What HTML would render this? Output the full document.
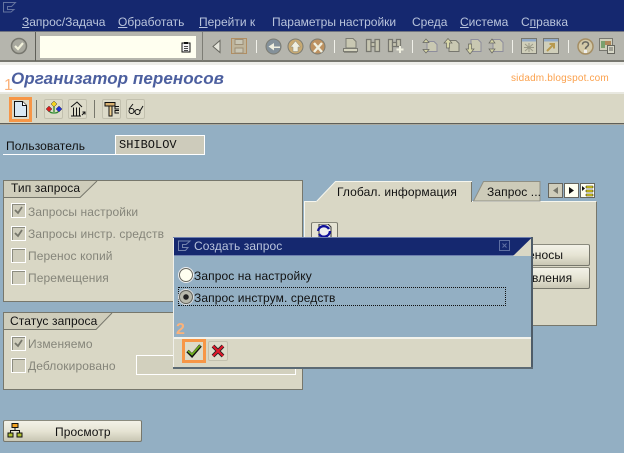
<!DOCTYPE html>
<html lang="ru"><head><meta charset="utf-8"><title>Организатор переносов</title>
<style>
html,body{margin:0;padding:0}
body{width:624px;height:453px;overflow:hidden;position:relative;background:#93afc3;font:12px/14px "Liberation Sans",sans-serif;letter-spacing:.1px;color:#111}
.a,svg,span.t{position:absolute}
.t{white-space:nowrap}
.m{position:absolute;top:15px;color:#b9c4dc;white-space:nowrap;letter-spacing:0}
.m u{text-underline-offset:1px}
.sep{position:absolute;width:1px;background:#f1f1ea}
.panel{position:absolute;background:#d9d7c5;border:1px solid #77776c;box-sizing:border-box}
.cb{position:absolute;width:13px;height:13px;border:1px solid #fff;background:#cfcdbc;box-shadow:inset 1px 1px 0 #8c8c80}
.g{color:#85857a}
.btn{position:absolute;box-sizing:border-box;border:1px solid #77776c;border-top-color:#8b8b7e;background:linear-gradient(#f3f2e8,#e6e4d4 50%,#c9c7b4);border-radius:2px}
.ib{position:absolute;top:99px;width:19px;height:20px;box-sizing:border-box;border:1px solid #c2c0ae;background:#dddbc9;border-radius:2px}
</style></head><body>
<div class="a" style="left:0;top:0;width:624px;height:31px;background:#15286f"></div>
<svg style="left:2px;top:1px" width="16" height="12" viewBox="0 0 16 12" fill="none" stroke="#64739f"><path d="M1.500 1.500H13.500L9.500 5.500H5.500V8.500H12L9 11H1.500Z"/></svg>
<span class="m" style="left:22px"><u>З</u>апрос/Задача</span>
<span class="m" style="left:118px"><u>О</u>бработать</span>
<span class="m" style="left:199px"><u>П</u>ерейти к</span>
<span class="m" style="left:272px">Параметры настройки</span>
<span class="m" style="left:412px">Среда</span>
<span class="m" style="left:460px"><u>С</u>истема</span>
<span class="m" style="left:521px">С<u>п</u>равка</span>

<div class="a" style="left:0;top:31px;width:624px;height:31px;background:#b5b5ad;border-top:1px solid #6f7380;border-bottom:2px solid #77776f;box-sizing:border-box"></div>
<div class="a" style="left:0;top:62px;width:624px;height:3px;background:#eeeeea"></div>
<svg style="left:10px;top:37px" width="18" height="18" viewBox="0 0 18 18"><circle cx="9" cy="9" r="7.500" fill="#a9a99f" stroke="#77776f" stroke-width="1.500"/><path d="M5 9l3 3 5-6" fill="none" stroke="#f2f2dc" stroke-width="2.200"/></svg>
<div class="a" style="left:35px;top:32px;width:1px;height:29px;background:#5f5f58"></div>
<div class="a" style="left:40px;top:36px;width:156px;height:22px;background:#fffff0"></div>
<svg style="left:181px;top:41px" width="10" height="12" viewBox="0 0 10 12"><path d="M1 2h8v9H1z" fill="#f4f4f4" stroke="#111"/><path d="M3 1h4v2H3z" fill="#111"/><path d="M3 5.500h4M3 7.500h4M3 9.500h4" stroke="#111" stroke-width=".8"/></svg>
<div class="a" style="left:202px;top:32px;width:1px;height:29px;background:#7d7d75"></div>
<svg style="left:211px;top:39px" width="11" height="15" viewBox="0 0 11 15"><path d="M9 1.500V13.500L2 7.500Z" fill="#e6e6dc" stroke="#66665f"/></svg>
<svg style="left:231px;top:38px" width="16" height="16" viewBox="0 0 16 16"><path d="M.5.500h15v15H.5z" fill="#bfb59c" stroke="#b18e63"/><path d="M4 1.500h8v5H4zM4 10h8v5H4z" fill="#c9c6b5" stroke="#9d8f76"/></svg>
<div class="sep" style="left:256px;top:40px;height:13px"></div>
<svg style="left:265px;top:38px" width="17" height="17" viewBox="0 0 17 17"><circle cx="8.500" cy="8.500" r="7.500" fill="#84919a" stroke="#7b7b72"/><path d="M15 8.500H9V5L3.500 8.500 9 12.500V10h6z" fill="#efefe0"/></svg>
<svg style="left:287px;top:38px" width="17" height="17" viewBox="0 0 17 17"><circle cx="8.500" cy="8.500" r="7.500" fill="#c8aa72" stroke="#7b7b72"/><path d="M8.500 3L3.500 9H6v4.500h5V9h2.500z" fill="#efefe0" stroke="#88887c" stroke-width=".5"/></svg>
<svg style="left:309px;top:38px" width="17" height="17" viewBox="0 0 17 17"><circle cx="8.500" cy="8.500" r="7.500" fill="#bd9160" stroke="#7b7b72"/><path d="M5 5l8 9M13 5l-8 9" stroke="#efefe0" stroke-width="2.400"/></svg>
<div class="sep" style="left:334px;top:40px;height:13px"></div>
<svg style="left:343px;top:38px" width="15" height="16" viewBox="0 0 15 16"><path d="M3 .500h7l3 3V10H3z" fill="#c9c8b2" stroke="#7b7b72"/><path d="M.5 10.500h14v3H.5z" fill="#d6d5c0" stroke="#7b7b72"/><path d="M1 14.500h13" stroke="#8c8c82"/></svg>
<svg style="left:365px;top:38px" width="16" height="15" viewBox="0 0 16 15" fill="#c6c5b0" stroke="#77776f" stroke-width="1.200"><path d="M1.500 1.500h4.500v12h-4.500zM10 1.500h4.500v12H10z"/><path d="M6 4.500h4v4H6z"/></svg>
<svg style="left:387px;top:38px" width="17" height="16" viewBox="0 0 17 16" fill="#c6c5b0" stroke="#77776f" stroke-width="1.200"><path d="M1.500 1.500h4v12h-4zM9.500 1.500h4v7h-4z"/><path d="M5.500 4.500h4v4h-4z"/><path d="M13 8v7M9.500 11.500h7" stroke="#eeeede" stroke-width="2"/></svg>
<div class="sep" style="left:412px;top:40px;height:13px"></div>
<svg style="left:421px;top:38px" width="17" height="16" viewBox="0 0 17 16"><path d="M6 3.500h7l3 3v7H6z" fill="#c9c8b2" stroke="#8d8d9c"/><path d="M5 1L2 4.500h6zM5 15l-3-3.500h6z" fill="#d7d6a8" stroke="#66665f" stroke-width=".7"/></svg>
<svg style="left:443px;top:38px" width="17" height="16" viewBox="0 0 17 16"><path d="M6 2.500h7l3 3v8H6z" fill="#c9c8b2" stroke="#77776f"/><path d="M5 .500L1 5h2.500v5h3V5H9z" fill="#d7d6a8" stroke="#66665f" stroke-width=".7"/></svg>
<svg style="left:465px;top:38px" width="17" height="17" viewBox="0 0 17 17"><path d="M6 1.500h7l3 3v9H6z" fill="#c9c8b2" stroke="#8d8d9c"/><path d="M5 16L1 11h2.500V6h3v5H9z" fill="#d7d6a8" stroke="#66665f" stroke-width=".7"/></svg>
<svg style="left:487px;top:38px" width="17" height="17" viewBox="0 0 17 17"><path d="M6 1.500h7l3 3v9H6z" fill="#c9c8b2" stroke="#8d8d9c"/><path d="M5 1L2 5h6zM5 15l-3-4h6z" fill="#d7d6a8" stroke="#66665f" stroke-width=".7"/></svg>
<div class="sep" style="left:512px;top:40px;height:13px"></div>
<svg style="left:521px;top:38px" width="16" height="16" viewBox="0 0 16 16"><path d="M.5.500h15v15H.5z" fill="#d0cfba" stroke="#77776f"/><path d="M1 1h14v2.500H1z" fill="#8fa8c8"/><path d="M8 5v9M4 6l8 7M12 6l-8 7M3 9.500h10" stroke="#9a9a88"/></svg>
<svg style="left:543px;top:38px" width="16" height="16" viewBox="0 0 16 16"><path d="M.5.500h15v15H.5z" fill="#d0cfba" stroke="#77776f"/><path d="M1 1h14v2.500H1z" fill="#8fa8c8"/><path d="M4 13l6-6M6.500 6H11v4.500" fill="none" stroke="#b89a4f" stroke-width="2"/></svg>
<div class="sep" style="left:568px;top:40px;height:13px"></div>
<svg style="left:577px;top:38px" width="17" height="17" viewBox="0 0 17 17"><circle cx="8.500" cy="8.500" r="7.500" fill="#d3c9a8" stroke="#a58e64" stroke-width="1.500"/><path d="M5.500 6.500C5.500 3 11.500 3 11.500 6.500 11.500 8.500 8.500 8.500 8.500 11" fill="none" stroke="#66665f" stroke-width="1.600"/><path d="M7 12h3v3H7z" fill="#eee"/></svg>
<svg style="left:599px;top:38px" width="16" height="16" viewBox="0 0 16 16"><path d="M.5.500h13v12H.5z" fill="#d0cfba" stroke="#77776f"/><path d="M2 3h4v7H2z" fill="#7aa06e"/><path d="M6 3h6v4H6z" fill="#b0885a"/><path d="M8.500 7.500h7v8h-7z" fill="#d8d8c8" stroke="#66665f"/><path d="M10 10h4M10 12h4" stroke="#66665f"/></svg>

<div class="a" style="left:0;top:65px;width:624px;height:27px;background:#fff"></div>
<span class="t" style="left:11px;top:69px;font:italic bold 17px/20px 'Liberation Sans',sans-serif;letter-spacing:.07px;color:#4c5f9f">Организатор переносов</span>
<span class="t" style="left:511px;top:72px;font:10px/13px 'Liberation Sans',sans-serif;letter-spacing:.18px;color:#fba14d">sidadm.blogspot.com</span>
<span class="t" style="left:4px;top:77px;font:16px/18px 'Liberation Sans',sans-serif;color:#fbb27a">1</span>
<div class="a" style="left:0;top:92px;width:624px;height:2px;background:#e8e8e0"></div>
<div class="a" style="left:0;top:94px;width:624px;height:29px;background:#d9d7c5"></div>
<div class="a" style="left:0;top:123px;width:624px;height:1px;background:#5f5f58"></div>
<div class="a" style="left:0;top:124px;width:624px;height:1px;background:#a9a99f"></div>

<div class="a" style="left:9px;top:97px;width:23px;height:25px;box-sizing:border-box;border:3px solid #f79646;background:#dddbc9"></div>
<svg style="left:14px;top:101px" width="13" height="16" viewBox="0 0 13 16"><path d="M.5.500h8l4 4v11H.5z" fill="#d8e8f4" stroke="#111"/><path d="M8.500.500v4h4" fill="#fff" stroke="#111"/></svg>
<div class="a" style="left:36px;top:100px;width:1px;height:18px;background:#77776c"></div>
<div class="ib" style="left:44px"></div>
<svg style="left:46px;top:101px" width="16" height="16" viewBox="0 0 16 16"><path d="M8 3v8M3 8c0 4 3 4 5 4s5 0 5-4" fill="none" stroke="#2e8b2e" stroke-width="1.300"/><path d="M8 0l3 3-3 3-3-3z" fill="#f2d21e" stroke="#444" stroke-width=".5"/><path d="M3 5l3 3-3 3-3-3z" fill="#d81e1e" stroke="#444" stroke-width=".5"/><path d="M13 5l3 3-3 3-3-3z" fill="#1e2ed8" stroke="#444" stroke-width=".5"/></svg>
<div class="ib" style="left:68px"></div>
<svg style="left:70px;top:101px" width="16" height="16" viewBox="0 0 16 16" fill="none" stroke="#111"><path d="M1 6L7 1l5 5"/><path d="M3.500 6.500v8M6.500 6.500v8M9.500 6.500v8M1 15h10"/><path d="M12 14l3-3M12.500 11H15v2.500"/></svg>
<div class="a" style="left:94px;top:100px;width:1px;height:18px;background:#77776c"></div>
<div class="ib" style="left:102px"></div>
<svg style="left:104px;top:101px" width="16" height="16" viewBox="0 0 16 16"><path d="M1 1.500h10V5H1z" fill="#d8b070" stroke="#111"/><path d="M5 5h3v10H5z" fill="#f0d090" stroke="#111"/><path d="M15 5.500H11V8h4M15 9.500h-4V12h4" fill="none" stroke="#111"/></svg>
<div class="ib" style="left:126px"></div>
<svg style="left:128px;top:102px" width="16" height="14" viewBox="0 0 16 14" fill="none" stroke="#111"><circle cx="3.500" cy="9" r="2.500"/><circle cx="9.500" cy="10" r="2.500"/><path d="M6 9l1 .5M1 7l4-5M12 9l3-5"/></svg>

<span class="t" style="left:6px;top:139px">Пользователь</span>
<div class="a" style="left:3px;top:154px;width:112px;height:1px;background:#fff"></div>
<div class="a" style="left:115px;top:135px;width:90px;height:20px;box-sizing:border-box;border:1px solid #fff;background:#cdcbbb;font:12px/16px 'Liberation Mono',monospace;letter-spacing:0;padding:1px 0 0 3px;color:#111">SHIBOLOV</div>

<div class="panel" style="left:3px;top:180px;width:300px;height:122px"></div>
<svg style="left:4px;top:181px" width="94" height="17" viewBox="0 0 94 17"><path d="M0 0H93L76 16.500H0Z" fill="#cfcdbb"/><path d="M0 16.500H76L93 0" fill="none" stroke="#77776c"/></svg>
<span class="t" style="left:11px;top:181px">Тип запроса</span>
<div class="cb" style="left:11px;top:203px"></div><svg style="left:13px;top:205px" width="11" height="11" viewBox="0 0 11 11"><path d="M2 5l3 3 4-6" fill="none" stroke="#77776c" stroke-width="1.800"/></svg>
<span class="t g" style="left:28px;top:205px">Запросы настройки</span>
<div class="cb" style="left:11px;top:226px"></div><svg style="left:13px;top:228px" width="11" height="11" viewBox="0 0 11 11"><path d="M2 5l3 3 4-6" fill="none" stroke="#77776c" stroke-width="1.800"/></svg>
<span class="t g" style="left:28px;top:227px">Запросы инстр. средств</span>
<div class="cb" style="left:11px;top:248px"></div>
<span class="t g" style="left:28px;top:249px">Перенос копий</span>
<div class="cb" style="left:11px;top:270px"></div>
<span class="t g" style="left:28px;top:271px">Перемещения</span>

<div class="panel" style="left:3px;top:312px;width:300px;height:78px"></div>
<svg style="left:4px;top:313px" width="109" height="17" viewBox="0 0 109 17"><path d="M0 0H108L92 16.500H0Z" fill="#cfcdbb"/><path d="M0 16.500H92L108 0" fill="none" stroke="#77776c"/></svg>
<span class="t" style="left:10px;top:314px">Статус запроса</span>
<div class="cb" style="left:11px;top:336px"></div><svg style="left:13px;top:338px" width="11" height="11" viewBox="0 0 11 11"><path d="M2 5l3 3 4-6" fill="none" stroke="#77776c" stroke-width="1.800"/></svg>
<span class="t g" style="left:28px;top:337px">Изменяемо</span>
<div class="cb" style="left:11px;top:358px"></div>
<span class="t g" style="left:28px;top:359px">Деблокировано</span>
<div class="a" style="left:136px;top:355px;width:160px;height:20px;box-sizing:border-box;border:1px solid #fff;background:#d2d0be"></div>

<div class="btn" style="left:3px;top:420px;width:139px;height:22px"></div>
<svg style="left:7px;top:423px" width="16" height="15" viewBox="0 0 16 15"><path d="M5 .500h6v4H5z" fill="#f0a020" stroke="#111"/><path d="M8 4.500v3M3.500 10V7.500h9V10" fill="none" stroke="#111"/><path d="M1 10h5v4H1zM10 10h5v4h-5z" fill="#b0c030" stroke="#111"/></svg>
<span class="t" style="left:55px;top:425px">Просмотр</span>

<div class="panel" style="left:304px;top:201px;width:293px;height:125px;border-top-color:#f6f6ee;border-left-color:#f6f6ee"></div>
<svg style="left:316px;top:181px" width="156" height="22" viewBox="0 0 156 22"><path d="M0 21L19.500.500H155.500V21" fill="#d9d7c5" stroke="#f6f6ee"/><path d="M-1 21.500h155" stroke="#d9d7c5" stroke-width="2"/><path d="M155.500 1V21" stroke="#77776c"/></svg>
<span class="t" style="left:337px;top:185px">Глобал. информация</span>
<svg style="left:473px;top:181px" width="68" height="21" viewBox="0 0 68 21"><path d="M.5 20L10.500.500H67V20Z" fill="#cdcbb9" stroke="#8f8f84"/></svg>
<span class="t" style="left:487px;top:185px">Запрос ...</span>
<div class="a" style="left:548px;top:183px;width:15px;height:15px;box-sizing:border-box;border:1px solid #66665f;background:#cfcdbb"><svg style="left:4px;top:3px" width="5" height="7" viewBox="0 0 5 7"><path d="M5 0V7L0 3.500z" fill="#77776c"/></svg></div>
<div class="a" style="left:564px;top:183px;width:15px;height:15px;box-sizing:border-box;border:1px solid #66665f;background:#fffff0"><svg style="left:4px;top:3px" width="5" height="7" viewBox="0 0 5 7"><path d="M0 0V7L5 3.500z" fill="#111"/></svg></div>
<div class="a" style="left:580px;top:183px;width:15px;height:15px;box-sizing:border-box;border:1px solid #66665f;background:#fffff0"><svg style="left:1px;top:1px" width="12" height="12" viewBox="0 0 12 12"><path d="M4 1h7v2H4zM4 5h7v2H4zM4 9h7v2H4z" fill="#f2e21e" stroke="#111" stroke-width=".5"/><path d="M0 1v5l3-2.500z" fill="#111"/></svg></div>
<div class="btn" style="left:311px;top:222px;width:27px;height:20px;background:#e6e4d4"></div>
<svg style="left:315px;top:224px" width="18" height="14" viewBox="0 0 18 14"><path d="M4 0h9l3 3v11H4z" fill="#eee" stroke="#333"/><path d="M3 7a6 6 0 0 1 11-2M15 7A6 6 0 0 1 4 10" fill="none" stroke="#10109a" stroke-width="2.400"/></svg>

<div class="btn" style="left:520px;top:244px;width:70px;height:22px"></div>
<div class="btn" style="left:520px;top:267px;width:70px;height:22px"></div>
<span class="t" style="left:528px;top:248px">еносы</span>
<span class="t" style="left:532px;top:271px">вления</span>

<div class="a" style="left:173px;top:237px;width:359px;height:1px;background:#6e7fae"></div>
<div class="a" style="left:174px;top:238px;width:358px;height:17px;background:#15286f"></div>
<div class="a" style="left:174px;top:255px;width:358px;height:1px;background:#6e7fae"></div>
<svg style="left:513px;top:237px" width="19" height="19" viewBox="0 0 19 19"><path d="M19 .500V19H0z" fill="#d9d7c5"/></svg>
<svg style="left:177px;top:240px" width="15" height="12" viewBox="0 0 15 12" fill="none" stroke="#7483ad"><path d="M1.500 1H13L9 4.500H5.500V7.500H11L8.500 10.500H1.500Z"/></svg>
<span class="t" style="left:194px;top:239px;color:#b9c4dc">Создать запрос</span>
<svg style="left:499px;top:240px" width="12" height="12" viewBox="0 0 12 12" fill="none" stroke="#5f70a3"><path d="M.5.500h10v10H.5zM3.500 3.500l4 4M7.500 3.500l-4 4"/></svg>
<div class="a" style="left:173px;top:238px;width:1px;height:129px;background:#f0f0ea"></div>
<div class="a" style="left:174px;top:256px;width:357px;height:81px;background:#93afc3"></div>
<div class="a" style="left:531px;top:237px;width:2px;height:132px;background:#4e5c68"></div>
<div class="a" style="left:174px;top:337px;width:357px;height:2px;background:#f3f3ec"></div>
<div class="a" style="left:174px;top:339px;width:357px;height:28px;background:#d9d7c5"></div>
<div class="a" style="left:173px;top:367px;width:360px;height:2px;background:#5c6a74"></div>

<div class="a" style="left:179px;top:268px;width:12px;height:12px;border-radius:50%;background:#fffff0;border:1px solid #66665f;box-shadow:0 0 0 1px #eee"></div>
<span class="t" style="left:194px;top:269px">Запрос на настройку</span>
<div class="a" style="left:178px;top:287px;width:328px;height:19px;box-sizing:border-box;border:1px dotted #111"></div>
<div class="a" style="left:179px;top:290px;width:12px;height:12px;border-radius:50%;background:radial-gradient(circle,#222 0 2.500px,#b9b9ac 3px);border:1px solid #66665f;box-shadow:0 0 0 1px #ddd"></div>
<span class="t" style="left:194px;top:291px">Запрос инструм. средств</span>

<span class="t" style="left:176px;top:322px;font:bold 16px/16px 'Liberation Sans',sans-serif;letter-spacing:0;color:#fbb27a">2</span>
<div class="a" style="left:182px;top:339px;width:24px;height:24px;box-sizing:border-box;border:3px solid #f79646;background:#dddbc9"></div>
<svg style="left:186px;top:343px" width="16" height="15" viewBox="0 0 16 15"><path d="M1.500 8L6 12.500 14.500 2.500" fill="none" stroke="#111" stroke-width="3.400"/><path d="M2 8L6 11.500 14 2.500" fill="none" stroke="#6fae1e" stroke-width="1.800"/></svg>
<div class="a" style="left:208px;top:341px;width:20px;height:20px;box-sizing:border-box;border:1px solid #c2c0ae;background:#dddbc9;border-radius:2px"></div>
<svg style="left:211px;top:344px" width="14" height="14" viewBox="0 0 14 14"><path d="M2 2l10 10M12 2L2 12" stroke="#222" stroke-width="3.800"/><path d="M2 2l10 10M12 2L2 12" stroke="#e0182a" stroke-width="2.200"/></svg>
</body></html>
